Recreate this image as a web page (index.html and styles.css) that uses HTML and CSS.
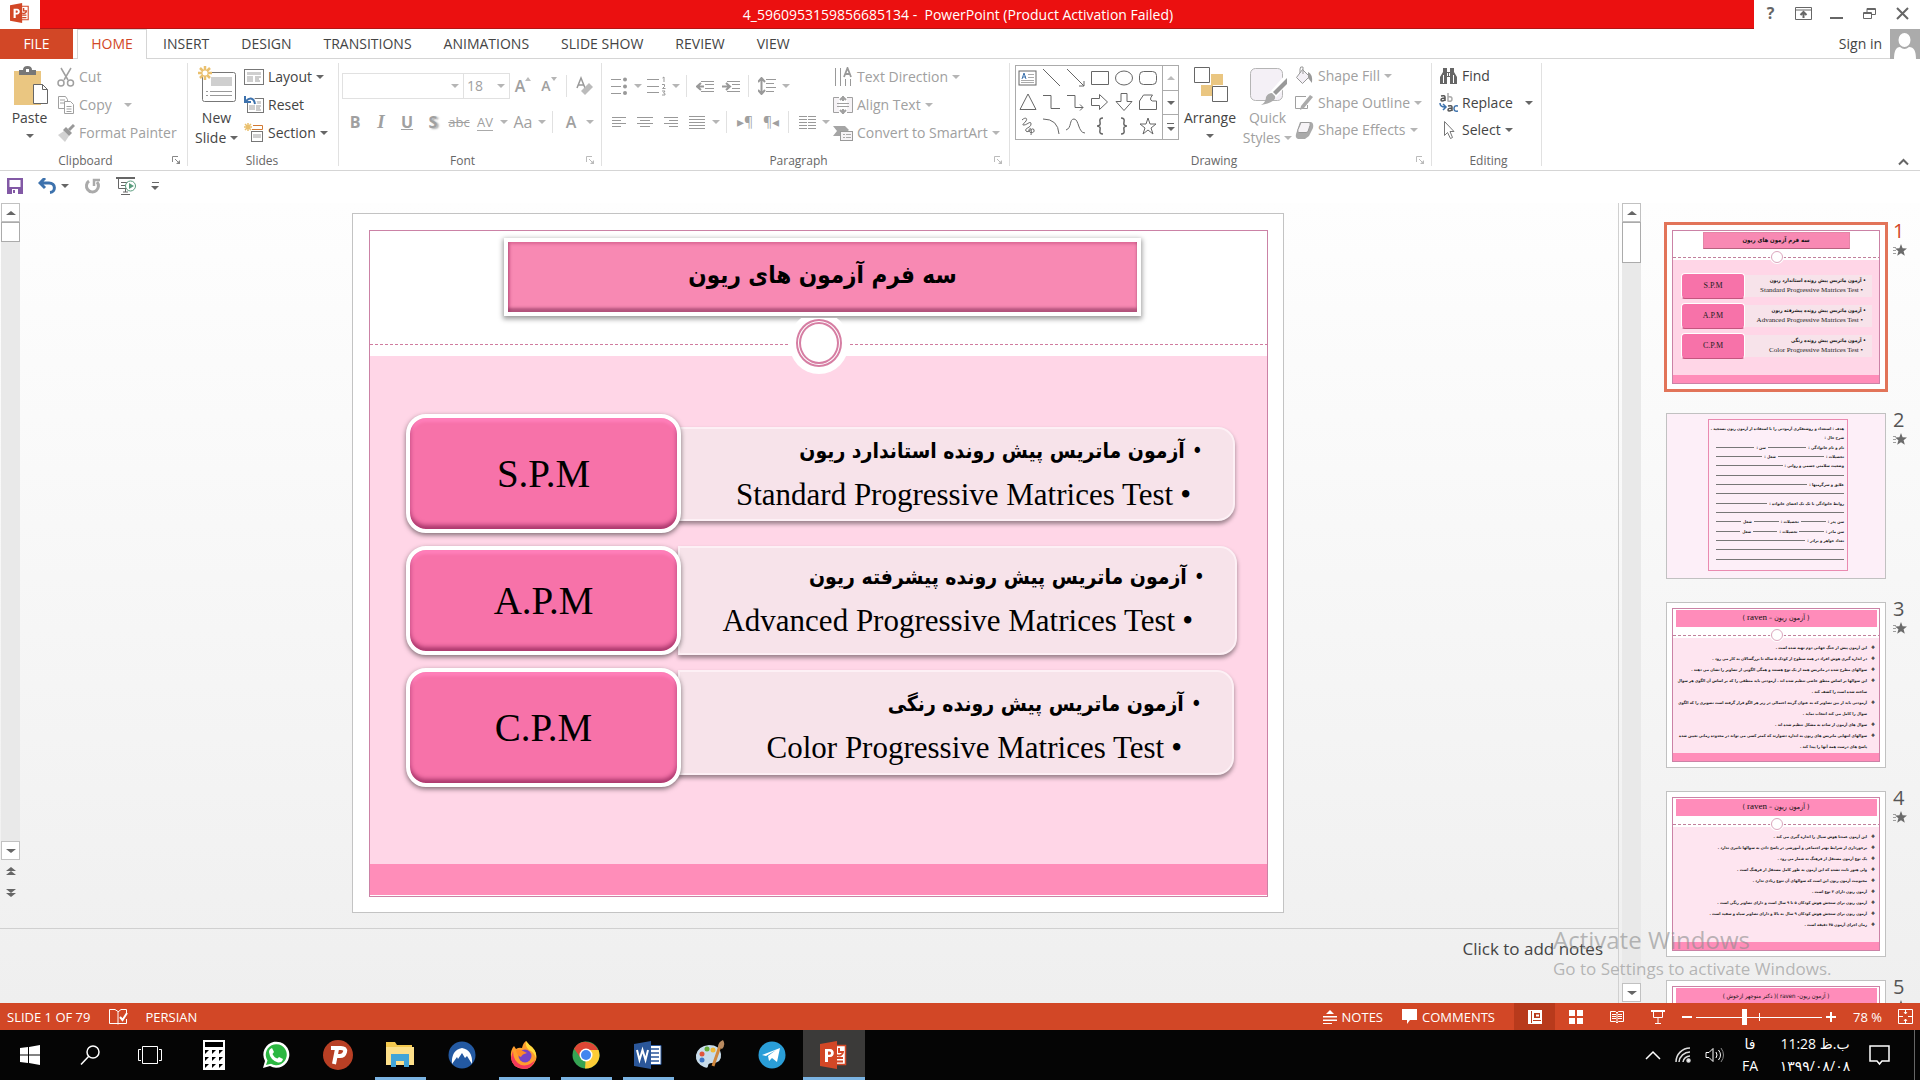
FILE: index.html
```html
<!doctype html>
<html lang="en">
<head>
  <meta charset="UTF-8">
  <title>PowerPoint</title>
  <link rel="stylesheet" href="styles.css">
</head>
<body>
  <!-- shared icons -->
  <svg class="defs" width="0" height="0">
    <symbol id="star" viewBox="0 0 14 12"><path fill="#6b6b6b" d="M8 0l1.600 4.200 4.400.2-3.400 2.800 1.200 4.600L8 9.200l-3.800 2.600 1.200-4.600L2 4.400l4.400-.2z"/><path stroke="#888" d="M0 3.500h3M0 6.500h3M0 9.500h3" stroke-width=".8"/></symbol>
    <symbol id="launch" viewBox="0 0 9 9"><path d="M.5 6V.5H6" fill="none" stroke="currentColor"/><path d="M3 3l4 4" stroke="currentColor"/><path d="M8 4v4H4z" fill="currentColor"/></symbol>
    <symbol id="ppt" viewBox="0 0 28 28"><path fill="#fff" stroke="#d24726" stroke-width="1.500" d="M14 4.500h11.500v19H14z"/><path fill="#d24726" d="M0 3L17 0v28L0 25z"/><path fill="#fff" d="M5 8h5c5 0 5 8 0 8H8v5H5zm3 2.500v3.200h1.500c2 0 2-3.200 0-3.200z"/><path fill="#d24726" d="M17 16h6v2h-6zM17 19.500h6v2h-6z"/><path fill="none" stroke="#d24726" stroke-width="2" d="M19 7v4h4a4 4 0 0 1-6 3"/></symbol>
  </svg>

  <header class="titlebar">
    <div class="applogo"><svg width="20" height="20"><use href="#ppt"/></svg></div>
    <h1 class="doctitle">4_5960953159856685134 -&nbsp; PowerPoint (Product Activation Failed)</h1>
    <div class="winbtns">
      <button aria-label="Help"><b>?</b></button>
      <button aria-label="Ribbon display"><svg width="17" height="13" fill="none" stroke="#666"><path d="M.5.5h16v12H.5zM.5 3h16"/><path d="M8.500 11V5M5.500 8l3-3 3 3" stroke-width="2"/></svg></button>
      <button aria-label="Minimize"><svg width="13" height="13"><path d="M0 11h13" stroke="#666" stroke-width="2"/></svg></button>
      <button aria-label="Restore"><svg width="13" height="13" fill="none" stroke="#666"><path d="M.5 5.500h8v6h-8zM.5 6.500h8M4 5V1.500h8.500v6H9M4 2.500h8.500"/></svg></button>
      <button aria-label="Close"><svg width="13" height="13"><path d="M1 1l11 11M12 1L1 12" stroke="#666" stroke-width="2"/></svg></button>
    </div>
  </header>

  <nav class="tabs">
    <a class="file" href="#">FILE</a>
    <a class="on" href="#">HOME</a>
    <a href="#">INSERT</a>
    <a href="#">DESIGN</a>
    <a href="#">TRANSITIONS</a>
    <a href="#">ANIMATIONS</a>
    <a href="#">SLIDE SHOW</a>
    <a href="#">REVIEW</a>
    <a href="#">VIEW</a>
    <a class="signin" href="#">Sign in</a>
    <svg class="avatar" width="30" height="30"><path fill="#ababab" d="M0 0h30v30H0z"/><ellipse cx="14.500" cy="11" rx="6" ry="7" fill="#fff"/><path fill="#fff" d="M4 30c0-8 2-12 6-12 3 2.500 6 2.500 9 0 5 0 7 4 7 12z"/></svg>
  </nav>

  <section class="ribbon">
    <div class="group clipboard">
      <div class="tools">
        <button class="big"><svg width="36" height="40"><path fill="#eac681" d="M2 6h27v34H2z"/><path fill="#777" d="M7 5h4q0-4 4.500-4T20 5h4v5H7z"/><path fill="#fff" d="M14 4h3v3h-3z"/><path fill="#fff" stroke="#666" d="M21.500 19.500h9l5 5v14h-14z"/><path fill="none" stroke="#666" d="M30.500 19.500v5h5"/></svg>Paste<i class="caret"></i></button>
        <div class="col">
          <button class="row off"><svg width="18" height="20" fill="none" stroke="#a0a0a0" stroke-width="1.500"><path d="M4 1l7 12M14 1L7 13"/><circle cx="4" cy="16" r="3"/><circle cx="13.500" cy="16" r="3"/></svg>Cut</button>
          <button class="row off"><svg width="18" height="20" fill="#fff" stroke="#a0a0a0"><path d="M1.500 1.500h7l2 3v9h-9zM3 5h5M3 8h5"/><path d="M7.500 6.500h6l3 3v9h-9zM9.500 11.500h5M9.500 14h5M9.500 16.500h5"/></svg>Copy <i class="caret far"></i></button>
          <button class="row off"><svg width="18" height="20"><path fill="#d2d2d2" d="M1 12l6-4 5 5-4 6z"/><path fill="#999" d="M6 7l3-3 6 6-3 3z"/><path stroke="#999" stroke-width="3" d="M12 7l5-5"/></svg>Format Painter</button>
        </div>
      </div>
      <div class="glabel"><span>Clipboard</span><svg width="9" height="9"><use href="#launch"/></svg></div>
    </div>

    <div class="group slides">
      <div class="tools">
        <button class="big"><svg width="40" height="40"><rect x="5.500" y="7.500" width="33" height="29" rx="2" fill="#fff" stroke="#777"/><path fill="#cfcfcf" d="M14 12h21v9H14z"/><path stroke="#999" d="M9 26.500h2M13 26.500h22M9 30.500h2M13 30.500h22"/><path stroke="#eac06e" stroke-width="2.500" d="M8 1v14M1 8h14M3 3l10 10M13 3L3 13"/><circle cx="8" cy="8" r="2.500" fill="#fff"/></svg>New<span>Slide <i class="caret"></i></span></button>
        <div class="col">
          <button class="row"><svg width="20" height="18"><rect x=".5" y="1.500" width="19" height="15" fill="#fff" stroke="#777"/><path fill="#cfcfcf" d="M3 4h14v3H3zM3 8h6v6H3z"/><path stroke="#999" d="M11 9h6M11 11h4M11 13h5"/></svg>Layout <i class="caret"></i></button>
          <button class="row"><svg width="20" height="18"><rect x="3.500" y="2.500" width="16" height="14" fill="#fff" stroke="#777"/><path fill="#cfcfcf" d="M12 5h5v3h-5zM5 9h6v5H5z"/><path stroke="#999" d="M12 10h5M12 12h4M12 14h5"/><path fill="none" stroke="#fff" stroke-width="5" d="M11 8C10 3 6 2 3 5"/><path fill="none" stroke="#3d72ad" stroke-width="2" d="M11 8C10 2 6 1 2 5M1 0v6h6"/></svg>Reset</button>
          <button class="row"><svg width="20" height="20"><path stroke="#eac06e" stroke-width="1.500" d="M4 0v8M0 4h8M1 1l6 6M7 1L1 7"/><path fill="none" stroke="#d27a34" d="M9 2.500h9.500v4H8"/><rect x="7.500" y="8.500" width="11" height="10" fill="#fff" stroke="#777"/><path fill="#cfcfcf" d="M9 11h8v4H9z"/></svg>Section <i class="caret"></i></button>
        </div>
      </div>
      <div class="glabel"><span>Slides</span></div>
    </div>

    <div class="group font off">
      <div class="tools lines">
        <div class="line">
          <span class="combo fname"><input type="text" aria-label="Font"><i class="caret"></i></span><span class="combo fsize"><input type="text" aria-label="Font size" value="18"><i class="caret"></i></span>
          <button class="ic" aria-label="Grow font"><b class="grow">A</b><i class="caret up mini"></i></button>
          <button class="ic" aria-label="Shrink font"><b class="shrink">A</b><i class="caret mini"></i></button>
          <i class="sep"></i>
          <button class="ic" aria-label="Clear formatting"><svg width="18" height="20"><path d="M1 12L5 2l4 10M2.500 9h5" fill="none" stroke="#999" stroke-width="1.500"/><path fill="#bbb" d="M5 15l8-8 4 4-8 8z"/></svg></button>
        </div>
        <div class="line">
          <button class="ic"><b>B</b></button>
          <button class="ic serif"><b><em>I</em></b></button>
          <button class="ic"><b><u>U</u></b></button>
          <button class="ic shadow"><b>S</b></button>
          <button class="ic small"><s>abc</s></button>
          <button class="ic small av"><span>AV</span></button><i class="caret"></i>
          <button class="ic">Aa</button><i class="caret"></i>
          <i class="sep"></i>
          <button class="ic"><b class="grow">A</b></button><i class="caret"></i>
        </div>
      </div>
      <div class="glabel"><span>Font</span><svg width="9" height="9"><use href="#launch"/></svg></div>
    </div>

    <div class="group para off">
      <div class="tools">
        <div class="lines">
          <div class="line">
            <button class="ic" aria-label="Bullets"><svg width="18" height="18"><path stroke="#999" d="M1 2.500h10M1 9.500h10M1 16.500h10"/><g fill="#999"><circle cx="15" cy="2.500" r="2"/><circle cx="15" cy="9.500" r="2"/><circle cx="15" cy="16" r="2"/></g></svg></button><i class="caret"></i>
            <button class="ic" aria-label="Numbering"><svg width="20" height="22" fill="none" stroke="#999"><path d="M0 4.500h12M0 11.500h12M0 17.500h12"/><path d="M15.500 3l1.500-1v5M15 9.500h2.500v2l-2 2h3M15 16h3l-1.500 2q2 0 1.500 2h-3"/></svg></button><i class="caret"></i>
            <i class="sep"></i>
            <button class="ic" aria-label="Decrease indent"><svg width="18" height="12"><path stroke="#999" d="M5 1.500h13M9 4.500h9M9 8.500h9M5 11.500h13"/><path stroke="#999" stroke-width="2" fill="none" d="M8 6.500H2M5 3L1 6.500 5 10"/></svg></button>
            <button class="ic" aria-label="Increase indent"><svg width="18" height="12"><path stroke="#999" d="M5 1.500h13M10 4.500h8M10 8.500h8M5 11.500h13"/><path stroke="#999" stroke-width="2" fill="none" d="M0 6.500h7M4 3l4 3.500L4 10"/></svg></button>
            <i class="sep"></i>
            <button class="ic" aria-label="Line spacing"><svg width="18" height="18"><path stroke="#999" d="M8 2.500h10M8 6.500h8M8 10.500h10M8 14.500h8"/><path stroke="#999" stroke-width="2" fill="none" d="M3.500 1v15M0 5l3.500-4L7 5M0 13l3.500 4L7 13"/></svg></button><i class="caret"></i>
          </div>
          <div class="line">
            <button class="ic" aria-label="Align left"><svg width="16" height="12"><path stroke="#999" d="M1 1.500h14M1 4.500h9M1 7.500h14M1 10.500h9"/></svg></button>
            <button class="ic" aria-label="Center"><svg width="16" height="12"><path stroke="#999" d="M0 1.500h16M3 4.500h10M0 7.500h16M3 10.500h10"/></svg></button>
            <button class="ic" aria-label="Align right"><svg width="16" height="12"><path stroke="#999" d="M1 1.500h14M6 4.500h9M1 7.500h14M6 10.500h9"/></svg></button>
            <button class="ic" aria-label="Justify"><svg width="16" height="13"><path stroke="#999" d="M0 .5h16M0 3.500h16M0 6.500h16M0 9.500h16M0 12.500h16"/></svg></button><i class="caret"></i>
            <i class="sep"></i>
            <button class="ic pil">▸¶</button>
            <button class="ic pil">¶◂</button>
            <i class="sep"></i>
            <button class="ic" aria-label="Columns"><svg width="17" height="13"><path stroke="#999" d="M0 .5h8M9 .5h8M0 3.500h8M9 3.500h8M0 6.500h8M9 6.500h8M0 9.500h8M9 9.500h8M0 12.500h8M9 12.500h8"/></svg></button><i class="caret"></i>
          </div>
        </div>
        <div class="col">
          <button class="row"><svg width="20" height="20" fill="none" stroke="#999"><path d="M2.500 1v18M7.500 1v18M12.500 12v7M17.500 12v7"/><path stroke-width="1.800" d="M11 10l3.500-9L18 10M12 7h5"/></svg>Text Direction <i class="caret"></i></button>
          <button class="row"><svg width="20" height="18" fill="none" stroke="#a0a0a0"><path fill="#f6f3f6" d="M6 1.500H.5v15H6M14 1.500h5.500v15H14"/><path d="M4 7.500h12M4 10.500h12"/><path stroke-width="2" d="M10 0v5M7 4l3-3 3 3M10 18v-5M7 14l3 3 3-3"/></svg>Align Text <i class="caret"></i></button>
          <button class="row"><svg width="20" height="18"><path fill="#a5a5a5" d="M0 2h12l4 4-7 6H0l4-5z"/><rect x="7.500" y="7.500" width="12" height="9" fill="#f6f3f6" stroke="#999"/><path stroke="#aaa" d="M10 10.500h2M13 10.500h5M10 13.500h2M13 13.500h5"/></svg>Convert to SmartArt <i class="caret"></i></button>
        </div>
      </div>
      <div class="glabel"><span>Paragraph</span><svg width="9" height="9"><use href="#launch"/></svg></div>
    </div>

    <div class="group drawing">
      <div class="tools">
        <div class="gallery">
          <div class="shapes">
            <button><svg width="20" height="18"><rect x="1" y="2" width="17" height="14"/><path stroke="#aaa" d="M10 5.500h6M10 8.500h6M3 11.500h13M3 13.500h13"/><path stroke="#3d72ad" d="M4 10l2-6 2 6M5 8h3"/></svg></button>
            <button><svg width="20" height="18"><path d="M1 0l17 17"/></svg></button>
            <button><svg width="20" height="18"><path d="M1 0l17 17M18 12v5h-5"/></svg></button>
            <button><svg width="20" height="18"><path d="M1.500 2.500h17v13h-17z"/></svg></button>
            <button><svg width="20" height="18"><ellipse cx="10" cy="9" rx="8.500" ry="7"/></svg></button>
            <button><svg width="20" height="18"><rect x="1.500" y="2.500" width="17" height="13" rx="4"/></svg></button>
            <button><svg width="20" height="18"><path d="M10 1l8 15.500H2z"/></svg></button>
            <button><svg width="20" height="18"><path d="M1 2.500h8v13h9"/></svg></button>
            <button><svg width="20" height="18"><path d="M1 2.500h8v12h8M14 11.500l3 3-3 3"/></svg></button>
            <button><svg width="20" height="18"><path d="M1.500 5.500h8v-4l8 7.500-8 7.500v-4h-8z"/></svg></button>
            <button><svg width="20" height="18"><path d="M7 .5h6v8h5l-8 9-8-9h5z"/></svg></button>
            <button><svg width="20" height="18"><path d="M1.500 16.500V8l4-6h9q-4 5 0 6h4v8.500z"/></svg></button>
            <button><svg width="20" height="18"><path d="M4 3c3-3 6-2 4 1s-5 4-2 4 7-5 7-1-7 4-5 7 7-5 8-1-6 3-5 0 3-2 2 5"/></svg></button>
            <button><svg width="20" height="18"><path d="M1 2q15 0 16 15"/></svg></button>
            <button><svg width="20" height="18"><path d="M0 13C6 11 3 2 8 2s4 14 11 14"/></svg></button>
            <button><svg width="20" height="18"><path d="M13 1q-4 0-3 4t-3 4q4 0 3 4t3 4" stroke-width="1.500"/></svg></button>
            <button><svg width="20" height="18"><path d="M7 1q4 0 3 4t3 4q-4 0-3 4t-3 4" stroke-width="1.500"/></svg></button>
            <button><svg width="20" height="18"><path d="M10 1l2 6h6l-5 4 2 6-5-4-5 4 2-6-5-4h6z"/></svg></button>
          </div>
          <div class="gscroll"><button class="off" aria-label="Up"><i class="caret up"></i></button><button aria-label="Down"><i class="caret"></i></button><button aria-label="More"><i class="bar"></i><i class="caret"></i></button></div>
        </div>
        <button class="big arrange"><svg width="36" height="40"><path fill="#eac681" d="M19 9h12v11H19zM9 20h12v11H9z"/><path fill="#fff" stroke="#666" d="M2.500 2.500h15v15h-15zM20.500 21.500h15v15h-15z"/></svg>Arrange<i class="caret"></i></button>
        <button class="big quick off"><svg width="38" height="40"><rect x="1.500" y="3.500" width="32" height="32" rx="5" fill="#f4f0f6" stroke="#b5b5b5"/><path stroke="#fff" stroke-width="8" d="M37 15L22 32"/><path fill="#999" d="M38 13v6L27 30l-3-3z"/><path fill="#aaa" d="M23 28l3 3q2 6-14 9 5-3 5-8 2-4 6-4z"/></svg>Quick<span>Styles <i class="caret"></i></span></button>
        <div class="col tight">
          <button class="row off"><svg width="20" height="20"><path fill="#f4f0f6" stroke="#999" d="M8.500 3.500l7 7-7 7-6-6z"/><path fill="none" stroke="#999" d="M6 7V3q0-3 3-2v7"/><path fill="#999" d="M14 6q5 2 4 11l-4-5z"/></svg>Shape Fill <i class="caret"></i></button>
          <button class="row off"><svg width="20" height="20"><path fill="none" stroke="#a0a0a0" d="M12 3.500H1.500v12h12V12"/><path fill="#aaa" d="M16 2l3 2-9 11-4 2 1-4z"/></svg>Shape Outline <i class="caret"></i></button>
          <button class="row off"><svg width="20" height="20"><path fill="#aaa" d="M6 2h11q3 1 2 6l-4 8-4 3H4q-3-1-2-5z"/><path fill="#f6f3f6" stroke="#999" d="M7 2.500h8q2 0 1 3l-2 6q-1 1-2 1H5q-2 0-1-3z"/></svg>Shape Effects <i class="caret"></i></button>
        </div>
      </div>
      <div class="glabel off"><span>Drawing</span><svg width="9" height="9"><use href="#launch"/></svg></div>
    </div>

    <div class="group editing">
      <div class="tools">
        <div class="col tight">
          <button class="row"><svg width="19" height="18" fill="#666"><path d="M4 1h4v4h3V1h4v4l3 5v7h-7v-7H8v7H1v-7l3-5z"/><path stroke="#fff" d="M4.500 8v8M14.500 8v8M8.500 6v3M10.500 6v3"/></svg>Find</button>
          <button class="row"><svg width="19" height="20" fill="none" stroke="#555" stroke-width="1.500"><path d="M2 3q4-1 4 1v4M6 5q-4 0-4 2t4 0"/><path stroke="#aaa" d="M9 0v8q4 1 4-2t-4-2"/><path d="M9 13q4-1 4 1v4M13 15q-4 0-4 2t4 0"/><path stroke="#3d72ad" d="M19 13q-4-1-4 2.500t4 2.500M1 10q0 4 5 4M4 11l3 3-3 3"/></svg>Replace <i class="caret far"></i></button>
          <button class="row"><svg width="19" height="20"><path fill="#fff" stroke="#777" d="M5.500 1.500v14l3-3 3 6 2-1-2.500-6h4z"/></svg>Select <i class="caret"></i></button>
        </div>
      </div>
      <div class="glabel"><span>Editing</span></div>
    </div>
    <button class="collapse" aria-label="Collapse ribbon"><svg width="11" height="8"><path fill="none" stroke="#666" stroke-width="2" d="M1 6.500l4.500-4.500L10 6.500"/></svg></button>
  </section>

  <div class="qat">
    <button aria-label="Save"><svg width="16" height="16"><path fill="#8259a5" d="M0 0h16v16H0z"/><path fill="#fff" d="M2.500 2h11v7h-11zM5 11h6v5H5z"/><path fill="#8259a5" d="M6 12h2v3H6z"/></svg></button>
    <button aria-label="Undo"><svg width="19" height="16" fill="none" stroke="#3d72ad" stroke-width="3"><path d="M2 5h9c7 0 7 9 1 9.500M7 0L2 5l5 5"/></svg><i class="caret"></i></button>
    <button aria-label="Redo"><svg width="17" height="17" fill="none" stroke="#aaa" stroke-width="3"><path d="M5 3A6 6 0 1 0 13 4"/><path d="M10 8V2h6" stroke-width="2.500"/></svg></button>
    <button aria-label="Start show"><svg width="20" height="18" fill="none" stroke="#666"><path d="M0 1h19" stroke-width="2"/><path d="M2.500 2v9.500H12M5 5.500h7M5 8.500h4M9.500 12v3M5 17.500h9M7 15h5"/><circle cx="14.500" cy="9" r="5" fill="#fff" stroke="#599c7d"/><path fill="#599c7d" stroke="none" d="M13 6l5 3-5 3z"/></svg></button>
    <button aria-label="Customize"><i class="bar"></i><i class="caret"></i></button>
  </div>

  <main class="work">
    <section class="editor">
      <div class="stage">
        <div class="scroll">
          <button aria-label="Scroll up"><i class="caret up big-c"></i></button>
          <div class="track"><i class="knob"></i></div>
          <button aria-label="Scroll down"><i class="caret big-c"></i></button>
          <button class="flat" aria-label="Previous slide"><i class="caret up big-c"></i><i class="caret up big-c"></i></button>
          <button class="flat" aria-label="Next slide"><i class="caret big-c"></i><i class="caret big-c"></i></button>
        </div>
        <div class="canvas">
          <article class="slide">
            <div class="frame">
              <div class="head">
                <h2 dir="rtl">سه فرم آزمون های ریون</h2>
                <i class="ring"></i>
              </div>
              <div class="body">
                <div class="test">
                  <div class="abbr">S.P.M</div>
                  <ul dir="rtl"><li>آزمون ماتریس پیش رونده استاندارد ریون</li><li class="en">Standard Progressive Matrices Test</li></ul>
                </div>
                <div class="test full">
                  <div class="abbr">A.P.M</div>
                  <ul dir="rtl"><li>آزمون ماتریس پیش رونده پیشرفته ریون</li><li class="en">Advanced Progressive Matrices Test</li></ul>
                </div>
                <div class="test last">
                  <div class="abbr">C.P.M</div>
                  <ul dir="rtl"><li>آزمون ماتریس پیش رونده رنگی</li><li class="en">Color Progressive Matrices Test</li></ul>
                </div>
              </div>
              <div class="foot"></div>
            </div>
          </article>
        </div>
      </div>
      <div class="notes">Click to add notes</div>
    </section>

    <aside class="panel">
      <div class="scroll">
        <button aria-label="Scroll up"><i class="caret up big-c"></i></button>
        <div class="track"><i class="knob tall"></i></div>
        <button aria-label="Scroll down"><i class="caret big-c"></i></button>
      </div>
      <ol class="thumbs">
        <li class="cur">
          <div class="thumb first">
            <div class="tframe">
              <div class="thead"><b dir="rtl">سه فرم آزمون های ریون</b><i class="tring"></i></div>
              <div class="tbody">
                <div class="ttest"><span>S.P.M</span><p dir="rtl">• آزمون ماتریس پیش رونده استاندارد ریون<em>Standard Progressive Matrices Test •</em></p></div>
                <div class="ttest"><span>A.P.M</span><p dir="rtl">• آزمون ماتریس پیش رونده پیشرفته ریون<em>Advanced Progressive Matrices Test •</em></p></div>
                <div class="ttest"><span>C.P.M</span><p dir="rtl">• آزمون ماتریس پیش رونده رنگی<em>Color Progressive Matrices Test •</em></p></div>
              </div>
              <div class="tfoot"></div>
            </div>
          </div>
          <div class="num">1<svg width="14" height="12"><use href="#star"/></svg></div>
        </li>
        <li>
          <div class="thumb form">
            <div class="sheet" dir="rtl">
              <p>هدف : استعداد و روشنفکری آزمودنی را با استفاده از آزمون ریون بسنجید .</p>
              <p>شرح حال :</p>
              <p>نام و نام خانوادگی :<i></i>سن :<i></i></p>
              <p>تحصیلات :<i></i>شغل :<i></i></p>
              <p>وضعیت سلامتی جسمی و روانی :<i></i></p>
              <p><i></i></p>
              <p>علایق و سرگرمیها :<i></i></p>
              <p><i></i></p>
              <p>روابط خانوادگی با تک تک اعضای خانواده :<i></i></p>
              <p><i></i></p>
              <p>سن پدر :<i></i>تحصیلات :<i></i>شغل<i></i></p>
              <p>سن مادر :<i></i>تحصیلات :<i></i>شغل<i></i></p>
              <p>تعداد خواهر و برادر :<i></i></p>
              <p><i></i></p>
              <p><i></i></p>
            </div>
          </div>
          <div class="num">2<svg width="14" height="12"><use href="#star"/></svg></div>
        </li>
        <li>
          <div class="thumb">
            <div class="tframe">
              <div class="thead wide"><b dir="rtl">( آزمون ریون – <span>raven</span> )</b><i class="tring"></i></div>
              <ul class="tbody pale" dir="rtl">
                <li>این آزمون پیش از جنگ جهانی دوم تهیه شده است .</li>
                <li>در اندازه گیری هوش افراد در همه سطوح از کودک ۵ ساله تا بزرگسالان به کار می رود .</li>
                <li>سوالهای مطرح شده در ماتریس همه از یک نوع هستند و همگی الگویی از تصاویر را نشان می دهند .</li>
                <li>این سوالها بر اساس منطق خاصی تنظیم شده اند . آزمودنی باید منطقی را که بر اساس آن الگوی هر سوال<br>ساخته شده است را کشف کند .</li>
                <li>آزمودنی باید از بین تصاویر که به عنوان گزینه احتمالی در زیر هر الگو قرار گرفته است تصویری را که الگوی<br>سوال را کامل می کند انتخاب نماید .</li>
                <li>سوال های آزمون از ساده به مشکل تنظیم شده اند .</li>
                <li>سوالهای انتهایی ماتریس های ریون به اندازه دشوارند که کمتر کسی می تواند در محدوده زمانی تعیین شده<br>پاسخ های درست همه آنها را پیدا کند .</li>
              </ul>
              <div class="tfoot"></div>
            </div>
          </div>
          <div class="num">3<svg width="14" height="12"><use href="#star"/></svg></div>
        </li>
        <li>
          <div class="thumb">
            <div class="tframe">
              <div class="thead wide"><b dir="rtl">( آزمون ریون – <span>raven</span> )</b><i class="tring"></i></div>
              <ul class="tbody pale" dir="rtl">
                <li>این آزمون عمدتا هوش سیال را اندازه گیری می کند .</li>
                <li>برخورداری از شرایط بهتر اجتماعی و آموزشی در پاسخ دادن به سوالها تاثیری ندارد .</li>
                <li>یک نوع آزمون مستقل از فرهنگ به شمار می رود .</li>
                <li>ولی هنوز ثابت نشده که این آزمون به طور کامل مستقل از فرهنگ است .</li>
                <li>محبوبیت آزمون ریون این است که سوالهای آن تنوع زیادی ندارد .</li>
                <li>آزمون ریون دارای ۳ نوع است .</li>
                <li>آزمون ریون برای سنجش هوش کودکان ۵ تا ۹ سال است و دارای تصاویر رنگی است .</li>
                <li>آزمون ریون برای سنجش هوش کودکان ۹ سال به بالا و دارای تصاویر سیاه و سفید است .</li>
                <li>زمان اجرای آزمون ۴۵ دقیقه است .</li>
              </ul>
              <div class="tfoot"></div>
            </div>
          </div>
          <div class="num">4<svg width="14" height="12"><use href="#star"/></svg></div>
        </li>
        <li>
          <div class="thumb">
            <div class="tframe">
              <div class="thead wide"><b dir="rtl" class="sm">( آزمون ریون- raven )( دکتر منوچهر ازخوش )</b></div>
            </div>
          </div>
          <div class="num">5<svg width="14" height="12"><use href="#star"/></svg></div>
        </li>
      </ol>
    </aside>
    <div class="watermark"><p class="w1">Activate Windows</p><p>Go to Settings to activate Windows.</p></div>
  </main>

  <footer class="status">
    <span>SLIDE 1 OF 79</span>
    <svg class="proof" width="19" height="16" fill="none" stroke="#fff"><path d="M9 14.500H.5V.5H6l3 2v13M9 3l3-2.500h5.500V4M9 14.500h8.500V10"/><path stroke-width="2" d="M11 8l2.500 3L18 4"/></svg>
    <span>PERSIAN</span>
    <div class="right">
      <button class="nb"><svg width="14" height="14" fill="#fff"><path d="M7 0l4 4H3zM0 6h14v1.500H0zM0 9.500h14V11H0zM0 13h9v1H0z"/></svg>NOTES</button>
      <button class="cb"><svg width="15" height="15" fill="#fff"><path d="M0 0h15v11H8l-3 4v-4H0z"/></svg>COMMENTS</button>
      <button class="view on" aria-label="Normal"><svg width="14" height="14"><path fill="#fff" d="M0 0h14v14H0z"/><path fill="#b83a1c" d="M3 1h1v12H3zM6 3h6v5H6zM5 10h8v1H5z"/><path fill="#fff" d="M8 4.500h3v2H8z"/></svg></button>
      <button class="view" aria-label="Slide sorter"><svg width="14" height="14" fill="#fff"><path d="M0 0h6v6H0zM8 0h6v6H8zM0 8h6v6H0zM8 8h6v6H8z"/></svg></button>
      <button class="view" aria-label="Reading view"><svg width="14" height="14" fill="none" stroke="#fff"><path d="M.5 1.500h5L7 3l1.500-1.500h5v10h-5L7 13l-1.500-1.500h-5zM7 3v10M2 4.500h4M2 6.500h4M2 8.500h4M8 4.500h4M8 6.500h4M8 8.500h4"/></svg></button>
      <button class="view" aria-label="Slide show"><svg width="14" height="14" fill="none" stroke="#fff"><path d="M0 1h14" stroke-width="2"/><path d="M2.500 2v5.500h9V2M7 8v5M4 13.500h6"/></svg></button>
      <button class="zb" aria-label="Zoom out"><svg width="10" height="10"><path stroke="#fff" stroke-width="2" d="M0 5h10"/></svg></button>
      <input class="zoom" type="range" min="0" max="100" value="38" aria-label="Zoom">
      <button class="zb" aria-label="Zoom in"><svg width="10" height="10"><path stroke="#fff" stroke-width="2" d="M0 5h10M5 0v10"/></svg></button>
      <span class="pct">78 %</span>
      <button class="fit" aria-label="Fit"><svg width="15" height="15" fill="none" stroke="#fff"><path d="M.5.5h14v14H.5z"/><path d="M7.500 1v4M7.500 14v-4M1 7.500h4M14 7.500h-4M6 3l1.500 2L9 3M6 12l1.500-2L9 12"/></svg></button>
    </div>
  </footer>

  <nav class="taskbar">
    <button class="sys" aria-label="Start"><svg width="20" height="20" fill="#fff"><path d="M0 3l8-1v7.500H0zM9 2l11-2v9.500H9zM0 10.500h8V18l-8-1zM9 10.500h11V20L9 18z"/></svg></button>
    <button class="sys" aria-label="Search"><svg width="20" height="20" fill="none" stroke="#fff" stroke-width="1.500"><circle cx="13" cy="7" r="6"/><path d="M9 11l-8 8.500"/></svg></button>
    <button class="sys" aria-label="Task view"><svg width="24" height="18" fill="none" stroke="#fff"><path d="M4.500.5h15v17h-15zM3 3.500H.5v11H3M21 3.500h2.500v11H21"/></svg></button>
    <button class="app calc" aria-label="Calculator"><svg width="22" height="30"><path fill="#fff" d="M0 0h22v30H0z"/><path fill="#000" d="M2 2h18v5H2zM2 10h4l-4 4zM9 10h4l-4 4zM16 10h4l-4 4zM2 17h4l-4 4zM9 17h4l-4 4zM16 17h4l-4 4zM2 24h4l-4 4zM9 24h4l-4 4zM16 24h4l-4 4z"/></svg></button>
    <button class="app" aria-label="WhatsApp"><svg width="28" height="28"><path fill="#fff" d="M1 27l2-7A13 13 0 1 1 8 25z"/><path fill="#2bb741" d="M4 24l1.500-4.500A10.500 10.500 0 1 1 9 22.800z"/><path fill="#fff" d="M10 7l2 4-1.500 2q2 4 5 4.500L17 16l4 2q-1 4-5 3.500Q8 19 7 11q0-3 3-4z"/></svg></button>
    <button class="app" aria-label="Psiphon"><svg width="30" height="30"><circle cx="15" cy="15" r="15" fill="#b83f24"/><path fill="none" stroke="#fff" stroke-width="4" d="M8 8h10q5 0 4 4t-5 4h-5M14 9l-3 15"/></svg></button>
    <button class="app open" aria-label="Explorer"><svg width="28" height="26"><path fill="#f4c94f" d="M0 0h9l2 3h15v5H0z"/><path fill="#fde08a" d="M0 5h28v18H0z"/><path fill="#41a5d8" d="M5 12h18v13h-5v-6h-8v6H5z"/></svg></button>
    <button class="app" aria-label="NordVPN"><svg width="28" height="28"><circle cx="14" cy="14" r="13.500" fill="#2359a2"/><path fill="#fff" d="M4 23Q3 9 14 7q11 2 10 16l-5-8-2 2-3-5-4 6-1-2z"/></svg></button>
    <button class="app open" aria-label="Firefox"><svg width="28" height="28"><path fill="#ff9d2e" d="M16 0q3 4 6 6 6 6 4 13-4 9-12 9Q2 27 1 17 0 9 4 5l2 3q3-2 6-1 1-5 4-7z"/><path fill="#f4395b" d="M3 10q0 10 8 14 8 2 14-5-3 9-11 9Q2 27 1 17z"/><circle cx="15" cy="15" r="6.500" fill="#7643c6"/><path fill="#ff8c26" d="M6 9q4-1 7 1l4 2q-5 1-6 4-4-1-5-7z"/><path fill="#ffdb3e" d="M16 0q3 4 6 6 5 5 4 11-2-6-7-8-4-3-3-9z"/></svg></button>
    <button class="app open" aria-label="Chrome"><svg width="28" height="28"><circle cx="14" cy="14" r="13.500" fill="#36a353"/><path fill="#fdcd36" d="M14 14l-1 13.500A13.500 13.500 0 0 0 26.500 9H14z"/><path fill="#df4735" d="M2 7.500a13.500 13.500 0 0 1 24 1.500H14l-6 7z"/><circle cx="14" cy="14" r="6.500" fill="#fff"/><circle cx="14" cy="14" r="5" fill="#4286ef"/></svg></button>
    <button class="app open" aria-label="Word"><svg width="28" height="28"><path fill="#fff" stroke="#2b579a" d="M15 4.500h12v19H15z"/><path stroke="#2b579a" stroke-width="1.500" d="M16 8h9M16 12h9M16 16h9M16 20h9"/><path fill="#2b579a" d="M0 3l17-3v28L0 25z"/><path fill="none" stroke="#fff" stroke-width="2" d="M3 9l2.500 10L8.500 9l3 10L14 9"/></svg></button>
    <button class="app" aria-label="Paint"><svg width="30" height="30"><path fill="#c8dcea" d="M14 5Q25 5 26 14t-9 9q-4 0-4 3t-4 1Q0 23 1 15 3 6 14 5z"/><circle cx="7" cy="14" r="2.500" fill="#e0553c"/><circle cx="12" cy="9" r="2.500" fill="#66ad3a"/><circle cx="18" cy="10" r="2.500" fill="#f2ba37"/><circle cx="7" cy="20" r="2.500" fill="#3f76c5"/><path stroke="#d0873d" stroke-width="3" d="M18 26l7-20"/><path fill="#b98b60" d="M23 7q0-5 5-7 3 5-1 9z"/></svg></button>
    <button class="app" aria-label="Telegram"><svg width="28" height="28"><circle cx="14" cy="14" r="13.500" fill="#2a9ed8"/><path fill="#fff" d="M4 14l18-7-3 14-5-4-3 3-1-5 8-6-10 6z"/></svg></button>
    <button class="app open cur" aria-label="PowerPoint"><svg width="28" height="28"><use href="#ppt"/></svg></button>
    <div class="tray">
      <svg width="16" height="10" fill="none" stroke="#fff" stroke-width="1.500"><path d="M1 9l7-7 7 7"/></svg>
      <svg width="16" height="16" fill="none" stroke="#ddd" stroke-width="1.500"><path d="M1 15A14 14 0 0 1 15 1M4 15A11 11 0 0 1 15 5M8 15a7 7 0 0 1 7-6"/><circle cx="13.500" cy="13.500" r="1.500" fill="#fff"/></svg>
      <svg width="20" height="16" fill="none" stroke="#fff"><path d="M1 5.500h3l4-4v13l-4-4H1zM11 5q2 3 0 6M13.500 3q4 5 0 10"/><path stroke="#888" d="M16 1q5 7 0 14"/></svg>
      <div class="lang"><span>فا</span><span>FA</span></div>
      <div class="clock" dir="rtl"><span>ب.ظ 11:28</span><span dir="ltr">۱۳۹۹/۰۸/۰۸</span></div>
      <svg width="21" height="21" fill="none" stroke="#fff" stroke-width="1.500"><path d="M1 1h19v15h-7l-2.500 3L8 16H1z"/></svg>
      <i class="desk"></i>
    </div>
  </nav>
</body>
</html>
```
FILE: styles.css
```css
*{box-sizing:border-box;}
body{margin:0;height:100vh;display:flex;flex-direction:column;overflow:hidden;font:14px/20px "Open Sans","DejaVu Sans",sans-serif;color:#444;background:#fff;}
button{font:inherit;color:inherit;background:none;border:0;padding:0;margin:0;}
a{color:inherit;text-decoration:none;}
p,h1,h2,ul,ol{margin:0;padding:0;}
ul,ol{list-style:none;}
svg{display:block;flex:none;}
.defs{position:absolute;}
i{font-style:normal;}
.off{color:#a0a0a0;}

/* small triangle used by every drop-down */
.caret{display:inline-block;flex:none;width:0;height:0;border:4px solid transparent;border-top-color:#666;border-bottom:0;}
.off .caret{border-top-color:#b5b5b5;}
.caret.up{border-top:0;border-bottom:4px solid #666;}
.off .caret.up{border-bottom-color:#bbb;}
.caret.big-c{border-left-width:5px;border-right-width:5px;}
.caret.far{margin-left:8px;}
.caret.mini{border-left-width:3px;border-right-width:3px;align-self:flex-start;margin-top:4px;}
.bar{display:block;width:7px;height:1px;background:#666;margin-bottom:3px;}

/* title bar */
.titlebar{display:flex;height:29px;background:#eb1010;border-bottom:1px solid #b31515;flex:none;}
.applogo{width:40px;height:29px;background:#fff;padding:3px 0 0 10px;}
.doctitle{flex:1;text-align:center;font-size:14px;font-weight:400;line-height:29px;color:#fff;padding-left:122px;}
.winbtns{display:flex;width:166px;height:29px;background:#fff;}
.winbtns button{width:33px;display:flex;align-items:center;justify-content:center;padding-bottom:3px;color:#666;font-size:16px;}

/* tabs */
.tabs{display:flex;height:30px;flex:none;border-bottom:1px solid #d5d5d5;line-height:30px;}
.tabs a{padding:0 16px;}
.tabs .file{width:73px;height:30px;padding:0;text-align:center;background:#d24726;color:#fff;margin-right:4px;}
.tabs .on{height:30px;width:70px;padding:0;text-align:center;line-height:28px;background:#fff;border:1px solid #d5d5d5;border-bottom:0;color:#d24726;}
.tabs .signin{margin-left:auto;padding:0 8px;}

/* ribbon */
.ribbon{display:flex;height:112px;flex:none;padding-top:4px;border-bottom:1px solid #d5d5d5;}
.group{display:flex;flex-direction:column;height:103px;border-right:1px solid #e1e1e1;}
.tools{display:flex;height:93px;}
.clipboard{width:188px;padding-left:2px;}
.slides{width:151px;padding-left:1px;}
.font{width:263px;padding-left:3px;}
.para{width:408px;padding-left:4px;}
.drawing{width:422px;padding-left:5px;}
.editing{width:110px;padding-left:7px;}
.glabel{display:flex;height:10px;line-height:10px;font-size:12px;color:#666;padding-right:3px;}
.glabel span{flex:1;text-align:center;}
.glabel svg{width:15px;color:#888;}
.off .glabel svg,.glabel.off svg{color:#bbb;}
.big{width:55px;display:flex;flex-direction:column;align-items:center;padding-top:2px;white-space:nowrap;}
.big svg{margin-bottom:3px;}
.big>.caret{margin-top:6px;}
.big span .caret{vertical-align:3px;}
.arrange{width:62px;}
.row{display:flex;align-items:center;gap:4px;height:28px;white-space:nowrap;}
.tight{margin-top:-1px;}
.tight .row{height:27px;}
.lines{display:flex;flex-direction:column;gap:10px;padding-top:10px;}
.para .lines{width:227px;}
.line{display:flex;align-items:center;height:26px;}
.ic{display:flex;align-items:center;justify-content:center;width:26px;height:26px;flex:none;font-size:16px;}
.line>.caret{margin:0 2px;}
.small{font-size:13px;}
.serif{font-family:"Liberation Serif",serif;font-size:19px;}
.shadow{text-shadow:2px 1px 2px #aaa;}
.av span{border-bottom:1px solid #aaa;line-height:16px;}
.pil{font-size:14px;}
.grow{font-size:16px;font-weight:600;}
.shrink{font-size:14px;font-weight:600;}
.sep{width:1px;height:22px;background:#e1e1e1;margin:0 5px 0 4px;flex:none;}
.combo{display:flex;align-items:center;height:26px;border:1px solid #e1e1e1;padding-right:4px;}
.combo input{width:100%;min-width:0;border:0;background:none;outline:0;font:inherit;color:#a0a0a0;padding:0 3px;}
.fname{width:122px;}
.fsize{width:47px;margin-left:-1px;}
.gallery{display:flex;width:164px;height:75px;margin-top:2px;border:1px solid #ababab;}
.shapes{display:grid;grid-template-columns:repeat(6,24px);grid-auto-rows:24px;width:146px;}
.shapes button{display:flex;align-items:center;justify-content:center;}
.shapes svg{fill:none;stroke:#666;}
.gscroll{flex:1;display:flex;flex-direction:column;border-left:1px solid #ababab;}
.gscroll button{flex:1;display:flex;flex-direction:column;align-items:center;justify-content:center;}
.gscroll button+button{border-top:1px solid #ababab;}
.quick{width:53px;}
.collapse{margin:0 11px 4px auto;align-self:flex-end;}

/* quick access */
.qat{display:flex;align-items:center;gap:15px;height:32px;padding:0 7px 2px;flex:none;}
.qat button{display:flex;align-items:center;gap:4px;}
.qat button:last-child{flex-direction:column;gap:0;}

/* work area */
.work{flex:1;min-height:0;display:flex;position:relative;background:linear-gradient(#fefefe,#efefef);}
.editor{flex:1;display:flex;flex-direction:column;border-right:1px solid #d0d0d0;}
.stage{flex:1;min-height:0;display:flex;padding-left:1px;}
.scroll{width:19px;display:flex;flex-direction:column;}
.scroll button{height:19px;flex:none;display:flex;flex-direction:column;align-items:center;justify-content:center;background:#fff;border:1px solid #c1c1c1;}
.scroll .flat{border:0;background:none;height:22px;}
.stage .scroll{padding-bottom:24px;}
.track{flex:1;background:#e9e9e9;}
.knob{display:block;height:20px;background:#fff;border:1px solid #ababab;}
.tall{height:41px;}
.canvas{flex:1;display:flex;justify-content:center;padding:10px 2px 15px 0;}
.notes{height:75px;flex:none;border-top:1px solid #d0d0d0;text-align:right;padding:8px 15px;font-size:17px;line-height:24px;}

/* current slide */
.slide{width:932px;height:100%;background:#fff;border:1px solid #c3c3c3;padding:16px 15px 15px 16px;}
.frame{height:100%;display:flex;flex-direction:column;border:1px solid #cb82a6;}
.head{position:relative;height:125px;flex:none;padding:7px 0 0 134px;background:linear-gradient(90deg,#d07c9f 60%,transparent 60%) 0 113px/5px 1px repeat-x #fff;}
.head h2{width:637px;height:78px;border:4px solid #fff;background:#f889b3;background-clip:padding-box;box-shadow:0 2px 5px 1px rgba(0,0,0,.4),inset 0 -4px 3px rgba(110,30,70,.5),inset 2px 2px 3px rgba(190,70,120,.5);text-align:center;font:bold 24px/66px "DejaVu Sans Condensed","DejaVu Sans",sans-serif;color:#000;}
.ring{position:absolute;left:426px;top:88px;width:46px;height:48px;border:5px double #d67ea3;border-radius:50%;background:#fff;box-shadow:0 0 0 7px #fff;clip-path:inset(-1px -8px -8px);}
.body{flex:1;min-height:0;display:flex;flex-direction:column;gap:13px;padding:58px 32px 0 36px;background:#ffd6e7;}
.foot{height:31px;margin-bottom:1px;background:#ff8db9;}
.test{display:flex;align-items:center;height:119px;}
.full{height:109px;align-items:stretch;}
.abbr{width:275px;height:100%;display:flex;align-items:center;justify-content:center;flex:none;z-index:1;border:4px solid #fff;border-radius:20px;background:#f772a9;box-shadow:0 2px 5px rgba(0,0,0,.5),inset 0 -4px 4px rgba(110,10,60,.55),inset 0 4px 3px #ff7fba;font:39px/40px "Liberation Serif",serif;color:#000;}
.test ul{flex:1;height:94px;margin-left:-3px;padding:0 30px 0 0;border:2px solid #fdf0f5;border-radius:0 17px 17px 0;background:#f7e3ea;box-shadow:0 3px 4px rgba(0,0,0,.4);font:bold 21px/44px "DejaVu Sans Condensed","DejaVu Sans",sans-serif;color:#000;}
.full ul{height:auto;padding-top:7px;margin-right:-2px;}
.last{align-items:flex-start;padding-right:1px;}
.last ul{height:105px;margin-top:2px;padding-top:10px;}
.test li{display:flex;line-height:44px;}
.test li::before{content:"•";margin-left:7px;font-weight:400;}
.test .en{font:31px/44px "Liberation Serif",serif;padding-right:12px;}
.last .en{padding-right:20px;}

/* slide list */
.panel{width:301px;display:flex;padding:0 0 1px 3px;overflow:hidden;}
.thumbs{padding:19px 0 0 23px;flex:1;}
.thumbs>li{display:flex;height:189px;gap:7px;margin-left:2px;}
.thumb{width:220px;height:166px;margin-top:2px;background:#fff;border:1px solid #c1c1c1;padding:5px;flex:none;}
.thumbs .cur{margin-left:0;gap:5px;}
.first{width:224px;height:170px;margin-top:0;border:3px solid #e27459;padding:5px;}
.num{font-size:20px;line-height:18px;color:#555;}
.cur .num{color:#d24726;}
.num svg{margin-top:4px;}
.tframe{height:100%;border:1px solid #cb82a6;display:flex;flex-direction:column;}
.thead{position:relative;height:29px;flex:none;padding:1px 0 0;background:linear-gradient(90deg,#c1809c 60%,transparent 60%) 0 26px/5px 1px repeat-x;}
.thead b{display:block;width:147px;height:17px;margin:0 auto;background:#f889b3;border:1px solid #e486a7;border-bottom-color:#b7627f;text-align:center;font:bold 6px/14px "DejaVu Sans Condensed","DejaVu Sans",sans-serif;color:#111;}
.wide b{width:201px;border:0;background:#ff8cba;font-size:7px;font-weight:400;line-height:16px;}
.wide b span{font:9px/10px "Liberation Serif",serif;}
.thead .sm{font-size:6px;}
.tring{position:absolute;left:98px;top:20px;width:12px;height:12px;border:1px solid #dba6bd;border-radius:50%;background:#fff;box-shadow:0 0 0 1px #fff;}
.tbody{flex:1;min-height:0;background:#ffd6e7;padding:13px 7px 0 8px;}
.pale{padding:4px 3px 0 2px;background:#fee5f0;font:bold 4px/11px "DejaVu Sans Condensed","DejaVu Sans",sans-serif;color:#222;white-space:nowrap;}
.pale li{padding-right:9px;}
.pale li::before{content:"❖";float:right;margin-right:-8px;font-size:5px;}
.tfoot{height:8px;background:#ff8db9;}
.ttest{display:flex;height:26px;margin-bottom:4px;}
.ttest span{width:64px;flex:none;border:1px solid #fff;border-bottom-color:#c4557f;border-radius:4px;background:#f772a9;font:8px/24px "Liberation Serif",serif;text-align:center;color:#222;}
.ttest p{flex:1;margin:2px 0;padding:0 6px 0 0;background:#f7e3ea;font:bold 5px/10px "DejaVu Sans Condensed","DejaVu Sans",sans-serif;color:#111;white-space:nowrap;}
.ttest em{display:block;direction:ltr;text-align:right;padding-right:3px;font:7px/10px "Liberation Serif",serif;color:#222;}
.form{background:#fdeff8;padding-left:41px;}
.sheet{width:140px;height:152px;border:1px solid #ea8ab0;padding:4px 3px 6px 7px;display:flex;flex-direction:column;justify-content:space-between;font:bold 4px/9px "DejaVu Sans Condensed","DejaVu Sans",sans-serif;color:#222;}
.sheet p{display:flex;align-items:center;gap:2px;height:9px;white-space:nowrap;}
.sheet i{flex:1;height:1px;background:#777;}

.watermark{position:absolute;left:1553px;top:720px;color:rgba(140,140,140,.6);font-size:17px;line-height:26px;white-space:nowrap;pointer-events:none;}
.w1{font-size:24px;line-height:33px;}

/* status bar */
.status{display:flex;align-items:center;height:27px;flex:none;padding-left:7px;background:#d24726;color:#fff;font-size:13px;}
.proof{margin:0 17px 0 19px;}
.right{margin-left:auto;display:flex;align-items:center;height:27px;padding-right:7px;}
.nb,.cb{display:flex;align-items:center;gap:5px;margin-right:19px;}
.view{width:41px;height:27px;display:flex;align-items:center;justify-content:center;}
.view.on{background:#b83a1c;}
.zb{margin:0 4px;}
.zoom{-webkit-appearance:none;appearance:none;width:126px;height:16px;margin:0;background:linear-gradient(#fff,#fff) 63px 4px/1px 8px no-repeat,linear-gradient(#fff,#fff) 0 8px/100% 1px no-repeat;}
.zoom::-webkit-slider-thumb{-webkit-appearance:none;width:5px;height:16px;background:#fff;}
.pct{margin:0 16px 0 13px;}

/* taskbar */
.taskbar{display:flex;height:50px;flex:none;background:#050505;color:#fff;}
.taskbar button{display:flex;align-items:center;justify-content:center;}
.sys{width:60px;}
.app{width:62px;}
.taskbar .calc{margin-left:3px;}
.open{background:linear-gradient(#7ab3e2,#7ab3e2) 50% 100%/51px 3px no-repeat;}
.open.cur{background:linear-gradient(#7ab3e2,#7ab3e2) 50% 100%/100% 3px no-repeat #3b3a39;}
.tray{margin-left:auto;display:flex;align-items:center;gap:14px;}
.lang,.clock{display:flex;flex-direction:column;align-items:center;line-height:22px;}
.lang{margin:0 7px 0 3px;}
.clock{width:72px;margin-right:4px;white-space:nowrap;}
.desk{width:6px;height:50px;border-left:1px solid #666;margin-left:10px;}
```
